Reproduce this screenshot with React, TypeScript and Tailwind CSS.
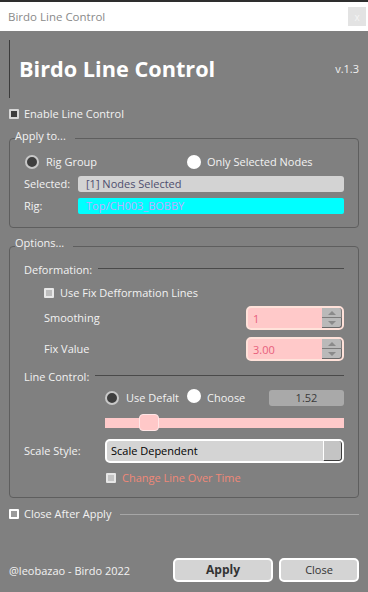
import React from "react";

const F = { fontFamily: '"Open Sans", "Noto Sans", sans-serif' };

function DarkCheck() {
  return <span className="inline-block w-[10px] h-[10px] border-2 border-[#d8d8d8] bg-[#3c3c3c] rounded-[1px] shrink-0" />;
}
function LightCheck() {
  return <span className="inline-block w-[10px] h-[10px] border-2 border-[#e8e8e8] bg-[#bdbdbd] rounded-[1px] shrink-0" />;
}
function HollowCheck() {
  return <span className="inline-block w-[10px] h-[10px] border-2 border-white bg-[#9a9a9a] rounded-[1px] shrink-0" />;
}
function DarkRadio() {
  return <span className="inline-block w-[14px] h-[14px] rounded-full border-2 border-[#c8c8c8] bg-[#3e3e3e] shrink-0" />;
}
function WhiteRadio() {
  return <span className="inline-block w-[14px] h-[14px] rounded-full bg-white shrink-0" />;
}

function Spin({ value }: { value: string }) {
  return (
    <div className="w-[98px] h-[24px] rounded-[5px] border-2 border-[#ffe2da] bg-[#ffc9c9] flex items-center justify-between pl-[5px]">
      <span className="text-[#e8607c] text-[11px] leading-none">{value}</span>
      <div className="flex flex-col h-full w-[20px]">
        <div className="flex-1 bg-[#b9b9b9] border-r border-b border-[#7c7c7c] rounded-tr-[3px] flex items-center justify-center">
          <svg width="8" height="4" viewBox="0 0 8 4"><path d="M0 4 L4 0 L8 4Z" fill="#8a8a8a" /></svg>
        </div>
        <div className="flex-1 bg-[#b9b9b9] border-r border-b border-[#6a6a6a] rounded-br-[3px] flex items-center justify-center">
          <svg width="8" height="4" viewBox="0 0 8 4"><path d="M0 0 L4 4 L8 0Z" fill="#8a8a8a" /></svg>
        </div>
      </div>
    </div>
  );
}

export default function App() {
  return (
    <div className="w-[368px] h-[592px] flex flex-col text-[11px] text-[#f2f2f2] overflow-hidden" style={F}>
      <div className="h-[2px] bg-[#2e2e2e] shrink-0" />
      <div className="h-[29px] bg-white flex items-center justify-between pl-[8px] pr-[2px] shrink-0">
        <span className="text-[#8a8a8a] text-[11.5px]">Birdo Line Control</span>
        <div className="w-[18px] h-[19px] bg-[#e3e3e3] flex items-center justify-center text-[10px] text-[#f4f4f4] leading-none">x</div>
      </div>
      <div className="flex-1 bg-[#808080] flex flex-col px-[9px] pt-[9px] pb-[10px]">
        {/* Header */}
        <div className="h-[58px] border-l border-[#3c3c3c] flex items-center justify-between pl-[9px]">
          <span className="text-white text-[21.7px] font-bold leading-none">Birdo Line Control</span>
          <span className="text-[11px] text-[#f0f0f0]">v.1.3</span>
        </div>
        <div className="mt-[8px] h-[16px] flex items-center gap-[5px]">
          <DarkCheck />
          <span>Enable Line Control</span>
        </div>

        {/* Apply to */}
        <fieldset className="border border-[#5e5e5e] rounded-[4px] mt-[6px] p-0 m-0">
          <legend className="ml-[5px] pr-[9px] pb-[4px] leading-[16px]">Apply to...</legend>
          <div className="px-[14px] pb-[13px]">
            <div className="mt-[6px] h-[16px] flex items-center">
              <div className="flex items-center gap-[7px] w-[163px] pl-[1px]">
                <DarkRadio />
                <span>Rig Group</span>
              </div>
              <div className="flex items-center gap-[6px]">
                <WhiteRadio />
                <span>Only Selected Nodes</span>
              </div>
            </div>
            <div className="mt-[6px] h-[16px] flex items-center">
              <span className="w-[54px]">Selected:</span>
              <div className="flex-1 h-[16px] bg-[#d3d3d3] rounded-[3px] pl-[8px] flex items-center text-[#4e4e6e]">[1] Nodes Selected</div>
            </div>
            <div className="mt-[6px] h-[16px] flex items-center">
              <span className="w-[54px]">Rig:</span>
              <div className="flex-1 h-[16px] bg-[#00ffff] rounded-[2px] pl-[8px] flex items-center text-[#c0a8ff]">Top/CH003_BOBBY</div>
            </div>
          </div>
        </fieldset>

        {/* Options */}
        <fieldset className="border border-[#5e5e5e] rounded-[4px] mt-[7px] p-0 m-0">
          <legend className="ml-[5px] pr-[9px] pb-[6px] leading-[16px]">Options...</legend>
          <div className="px-[14px] pb-[11px]">
            <div className="mt-[5px] h-[16px] flex items-center gap-[6px]">
              <span>Deformation:</span>
              <div className="flex-1 h-px bg-[#4a4a4a] -mt-[3px]" />
            </div>
            <div className="mt-[7px] h-[16px] flex items-center gap-[6px] pl-[20px]">
              <LightCheck />
              <span>Use Fix Defformation Lines</span>
            </div>
            <div className="mt-[5px] h-[24px] flex items-center justify-between pl-[20px]">
              <span>Smoothing</span>
              <Spin value="1" />
            </div>
            <div className="mt-[7px] h-[24px] flex items-center justify-between pl-[20px]">
              <span>Fix Value</span>
              <Spin value="3.00" />
            </div>
            <div className="mt-[8px] h-[16px] flex items-center gap-[6px]">
              <span>Line Control:</span>
              <div className="flex-1 h-px bg-[#4a4a4a] -mt-[3px]" />
            </div>
            <div className="mt-[5px] h-[16px] flex items-center pl-[81px]">
              <DarkRadio />
              <span className="ml-[7px]">Use Defalt</span>
              <span className="ml-[8px]"><WhiteRadio /></span>
              <span className="ml-[6px]">Choose</span>
              <div className="ml-auto w-[75px] h-[16px] bg-[#a9a9a9] rounded-[3px] flex items-center justify-center text-[#3a3a3a]">1.52</div>
            </div>
            <div className="mt-[8px] h-[17px] ml-[81px] flex items-center">
              <div className="flex-1 h-[10px] bg-[#ffcaca] flex items-center">
                <div className="ml-[34px] w-[20px] h-[17px] bg-[#ffc8c8] border border-[#ffe6e6] rounded-[4px]" />
              </div>
            </div>
            <div className="mt-[8px] h-[24px] flex items-center">
              <span className="w-[81px]">Scale Style:</span>
              <div className="flex-1 h-[24px] border-2 border-white rounded-[5px] bg-[#d4d4d4] flex items-stretch overflow-hidden">
                <span className="flex-1 flex items-center pl-[4px] text-black">Scale Dependent</span>
                <div className="w-[19px] bg-[#c4c4c4] border-l border-white border-r border-b border-r-[#3c3c3c] border-b-[#3c3c3c] rounded-r-[3px]" />
              </div>
            </div>
            <div className="mt-[7px] h-[16px] flex items-center gap-[6px] pl-[82px]">
              <span className="inline-block w-[10px] h-[10px] border-2 border-[#e6e6e6] bg-[#c4c4c4] rounded-[1px]" />
              <span className="text-[#f08878]">Change Line Over Time</span>
            </div>
          </div>
        </fieldset>

        <div className="mt-[8px] h-[16px] flex items-center gap-[5px]">
          <HollowCheck />
          <span>Close After Apply</span>
          <div className="flex-1 h-px bg-[#a6a6a6] ml-[4px]" />
        </div>

        <div className="mt-auto h-[24px] flex items-center">
          <span className="flex-1 pt-[2px]">@leobazao - Birdo 2022</span>
          <button className="w-[100px] h-[24px] bg-[#d4d4d4] border-2 border-white rounded-[5px] font-bold text-[#333] text-[12px]">Apply</button>
          <button className="ml-[6px] w-[80px] h-[24px] bg-[#d4d4d4] border-2 border-white rounded-[5px] text-[#333] text-[11px]">Close</button>
        </div>
      </div>
    </div>
  );
}
